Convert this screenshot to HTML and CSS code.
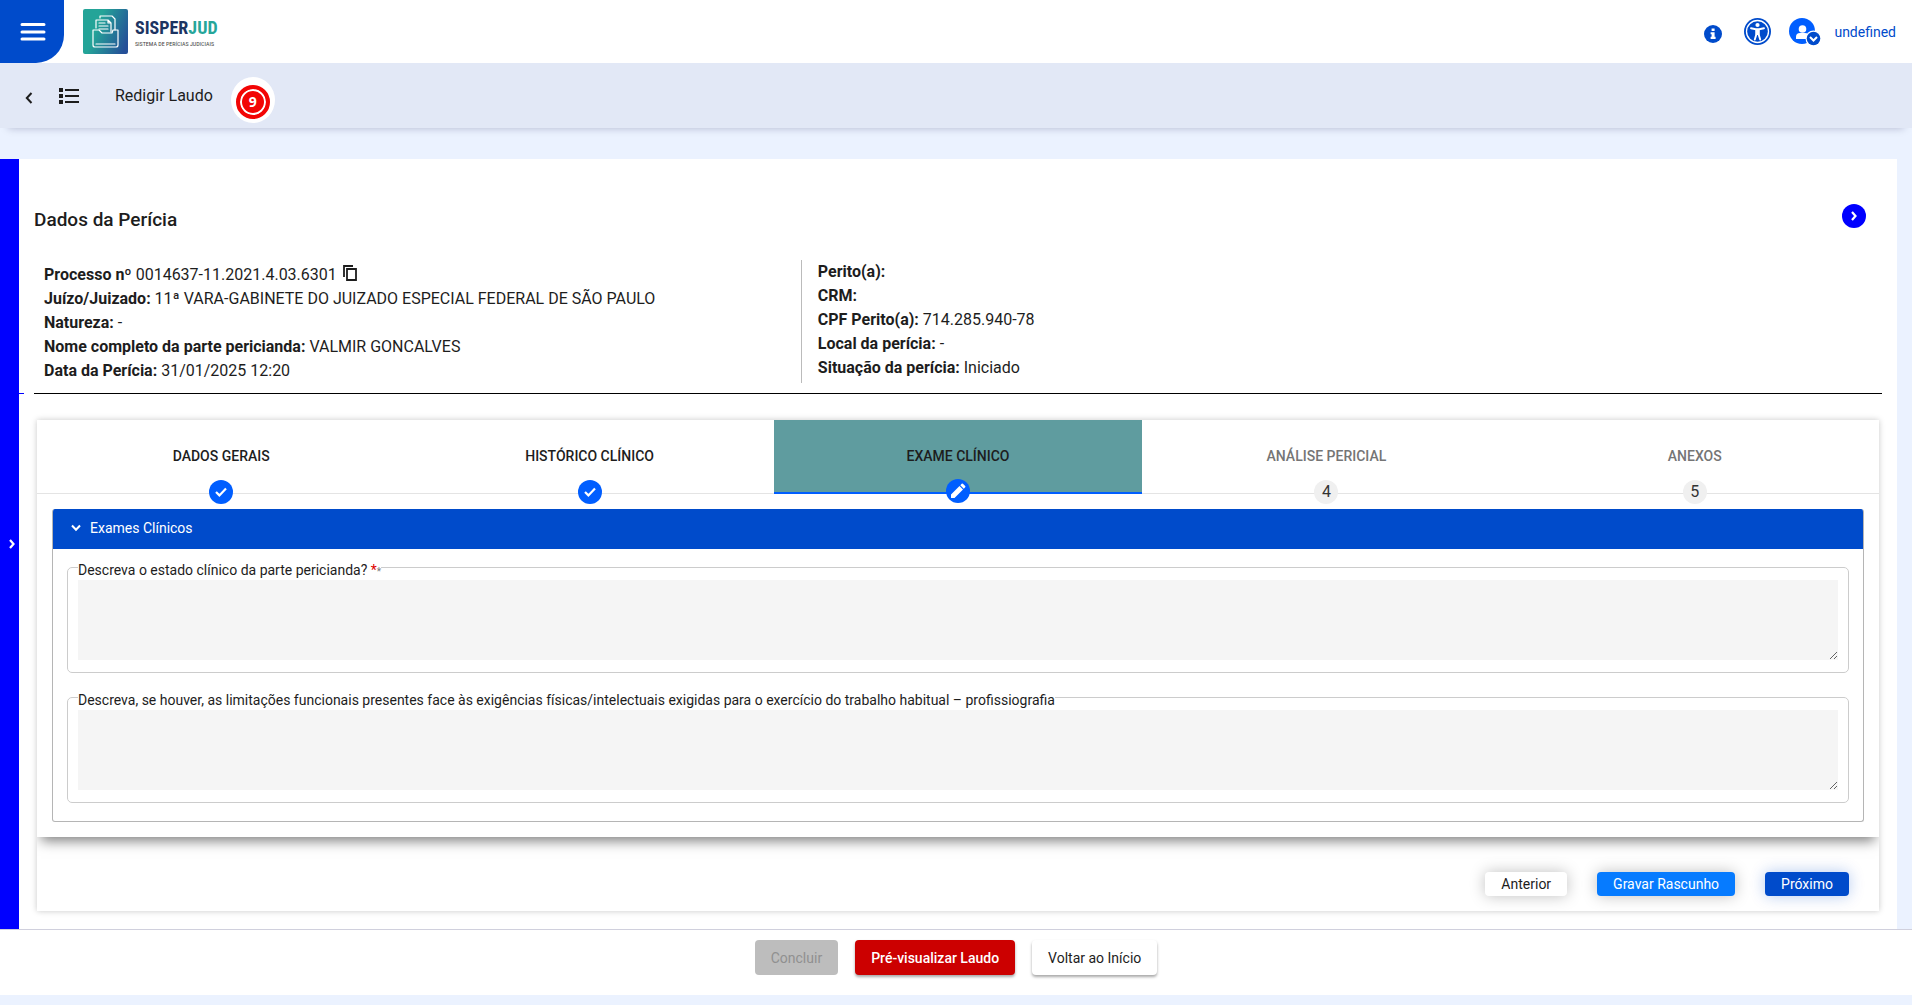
FILE: index.html
```html
<!DOCTYPE html>
<html lang="pt-BR">
<head>
<meta charset="utf-8">
<meta name="viewport" content="width=device-width, initial-scale=1">
<title>SISPERJUD - Redigir Laudo</title>
<link rel="stylesheet" href="styles.css">
</head>
<body>
<header class="topbar">
  <button class="menu-button" type="button" aria-label="Menu">
    <svg width="26" height="18" viewBox="0 0 26 18" fill="none" stroke="#fff" stroke-width="3" stroke-linecap="round"><path d="M2 1.5h22M2 9h22M2 16h22"/></svg>
  </button>
  <a class="logo" href="#">
    <svg class="logo-mark" width="45" height="45" viewBox="0 0 45 45">
      <defs><linearGradient id="brand" x1="0" y1="0.3" x2="1" y2="0.7"><stop offset="0.3" stop-color="#24a498"/><stop offset="1" stop-color="#254f98"/></linearGradient></defs>
      <rect width="45" height="45" rx="2" fill="url(#brand)"/>
      <g fill="none" stroke="#fff" stroke-width="1.2" stroke-linejoin="round" stroke-linecap="round">
        <path d="M17 9V7h12l3 3v11"/>
        <path d="M13 19V11h12l3 3v9M25 11v3h3M16 14h6M16 17h9M16 20h9"/>
        <path d="M10 36V21h6l3 3h10l1-3h5v15q0 2-2 2H12q-2 0-2-2zM13 35h19"/>
      </g>
    </svg>
    <span class="logo-text"><span class="logo-name">SISPER<span class="logo-accent">JUD</span></span><span class="logo-sub">SISTEMA DE PERÍCIAS JUDICIAIS</span></span>
  </a>
  <div class="user-area">
    <button class="icon-button" type="button" aria-label="Informações">
      <svg width="18" height="18" viewBox="0 0 18 18"><circle cx="9" cy="9" r="9" fill="#004bcb"/><path fill="#fff" d="M7.6 3.6h3v2.4h-3zM6.6 7.2h4v4.6h1V14H6.6v-2.2h1V9.300h-1z"/></svg>
    </button>
    <button class="icon-button" type="button" aria-label="Acessibilidade">
      <svg width="27" height="27" viewBox="0 0 27 27"><circle cx="13.500" cy="13.500" r="13.500" fill="#004bcb"/><circle cx="13.500" cy="13.500" r="11" fill="none" stroke="#fff" stroke-width="1.300"/><circle cx="13.500" cy="7" r="2.100" fill="#fff"/><path d="M7 10.300l4.800 1h3.400l4.800-1M12.300 11.500v5l-1.500 5M14.700 11.500v5l1.500 5" fill="none" stroke="#fff" stroke-width="1.900" stroke-linecap="round"/><path d="M11.600 11h3.800v6h-3.800z" fill="#fff"/></svg>
    </button>
    <button class="user-button" type="button">
      <svg width="32" height="28" viewBox="0 0 32 28"><circle cx="13" cy="13" r="13" fill="#005eff"/><circle cx="13.500" cy="11" r="3.800" fill="#fff"/><path d="M7 21v-2q0-4 4-4h5q4 0 4 4v2z" fill="#fff"/><circle cx="24.500" cy="20.500" r="8" fill="#fff"/><circle cx="24.500" cy="20.500" r="6.800" fill="#004bcb"/><path d="M21 19l3.500 3.500L28 19" fill="none" stroke="#fff" stroke-width="2"/></svg>
      <span>undefined</span>
    </button>
  </div>
</header>

<nav class="titlebar">
  <button class="icon-button back-button" type="button" aria-label="Voltar">
    <svg width="8" height="12" viewBox="0 0 8 12"><path d="M6.500 1L1.800 6l4.700 5" fill="none" stroke="#1d1d1d" stroke-width="2"/></svg>
  </button>
  <button class="icon-button list-button" type="button" aria-label="Lista">
    <svg width="20" height="16" viewBox="0 0 20 16" fill="#1d1d1d"><path d="M0 0h4v4H0zM0 6h4v4H0zM0 12h4v4H0zM6 1h14v2H6zM6 7h14v2H6zM6 13h14v2H6z"/></svg>
  </button>
  <h1 class="page-title">Redigir Laudo</h1>
  <span class="marker"><span class="marker-ring">9</span></span>
</nav>

<div class="workspace">
  <button class="side-toggle" type="button" aria-label="Expandir menu lateral">
    <svg width="6" height="10" viewBox="0 0 6 10"><path d="M1 1l3.500 4L1 9" fill="none" stroke="#fff" stroke-width="2.200"/></svg>
  </button>
  <main class="panel">
    <div class="panel-head">
      <h2>Dados da Perícia</h2>
      <button class="round-button" type="button" aria-label="Mostrar detalhes">
        <svg width="6" height="10" viewBox="0 0 6 10"><path d="M1 1l3.500 4L1 9" fill="none" stroke="#fff" stroke-width="2.200"/></svg>
      </button>
    </div>

    <section class="details">
      <div class="detail-col">
        <p><b>Processo nº</b> 0014637-11.2021.4.03.6301 <button class="copy-button" type="button" aria-label="Copiar número"><svg width="14" height="16" viewBox="0 0 14 16" fill="none" stroke="#1d1d1d" stroke-width="1.800"><path d="M1 12V1h9M4 4h9v11H4z"/></svg></button></p>
        <p><b>Juízo/Juizado:</b> 11ª VARA-GABINETE DO JUIZADO ESPECIAL FEDERAL DE SÃO PAULO</p>
        <p><b>Natureza:</b> -</p>
        <p><b>Nome completo da parte pericianda:</b> VALMIR GONCALVES</p>
        <p><b>Data da Perícia:</b> 31/01/2025 12:20</p>
      </div>
      <div class="detail-col detail-expert">
        <p><b>Perito(a):</b></p>
        <p><b>CRM:</b></p>
        <p><b>CPF Perito(a):</b> 714.285.940-78</p>
        <p><b>Local da perícia:</b> -</p>
        <p><b>Situação da perícia:</b> Iniciado</p>
      </div>
    </section>

    <section class="stepper">
      <div class="tabs" role="tablist">
        <button class="tab" type="button" role="tab">DADOS GERAIS<span class="dot done"><svg width="12" height="10" viewBox="0 0 12 10"><path d="M1 5l3.400 3.400L11 1.500" fill="none" stroke="#fff" stroke-width="2.200"/></svg></span></button>
        <button class="tab" type="button" role="tab">HISTÓRICO CLÍNICO<span class="dot done"><svg width="12" height="10" viewBox="0 0 12 10"><path d="M1 5l3.400 3.400L11 1.500" fill="none" stroke="#fff" stroke-width="2.200"/></svg></span></button>
        <button class="tab active" type="button" role="tab" aria-selected="true">EXAME CLÍNICO<span class="dot done"><svg width="16" height="16" viewBox="0 0 16 16" fill="#fff"><path d="M1 15v-3.500l8.500-8.500 3.500 3.500L4.500 15zM10.300 2.200l1.400-1.400q.6-.5 1.200 0l2.300 2.300q.5.600 0 1.200l-1.400 1.400z"/></svg></span></button>
        <button class="tab pending" type="button" role="tab">ANÁLISE PERICIAL<span class="dot">4</span></button>
        <button class="tab pending" type="button" role="tab">ANEXOS<span class="dot">5</span></button>
      </div>

      <div class="step-content">
        <div class="card">
          <button class="card-head" type="button" aria-expanded="true">
            <svg width="10" height="8" viewBox="0 0 10 8"><path d="M1 1.500l4 4.200 4-4.200" fill="none" stroke="#fff" stroke-width="2"/></svg>
            Exames Clínicos
          </button>
          <div class="card-body">
            <div class="field">
              <label for="estado">Descreva o estado clínico da parte pericianda? <span class="required">*</span> <span class="hint">*</span></label>
              <textarea id="estado" required></textarea>
            </div>
            <div class="field">
              <label for="limitacoes">Descreva, se houver, as limitações funcionais presentes face às exigências físicas/intelectuais exigidas para o exercício do trabalho habitual – profissiografia</label>
              <textarea id="limitacoes"></textarea>
            </div>
          </div>
        </div>
      </div>

      <div class="step-actions">
        <button class="btn" type="button">Anterior</button>
        <button class="btn save" type="button">Gravar Rascunho</button>
        <button class="btn next" type="button">Próximo</button>
      </div>
    </section>
  </main>
</div>

<footer class="bottom-actions">
  <button class="btn tall" type="button" disabled>Concluir</button>
  <button class="btn tall preview" type="button">Pré-visualizar Laudo</button>
  <button class="btn tall" type="button">Voltar ao Início</button>
</footer>
</body>
</html>
```
FILE: styles.css
```css
* { box-sizing: border-box; }

body {
  margin: 0;
  background: #ebf2ff;
  color: #1d1d1d;
  font: 16px/24px Roboto, sans-serif;
}

button {
  margin: 0;
  padding: 0;
  border: 0;
  background: none;
  color: inherit;
  font: inherit;
  cursor: pointer;
}

svg { display: block; flex: none; }
h1, h2, p { margin: 0; }

/* Top bar */
.topbar {
  display: flex;
  align-items: center;
  height: 63px;
  padding-right: 16px;
  background: #fff;
}

.menu-button {
  display: flex;
  align-items: center;
  align-self: stretch;
  width: 64px;
  padding-left: 20px;
  border-bottom-right-radius: 28px;
  background: #004bcb;
}

.logo {
  display: flex;
  gap: 7px;
  margin-left: 19px;
  color: #1c3462;
  text-decoration: none;
}

.logo-text {
  display: flex;
  flex-direction: column;
  padding-top: 7px;
  white-space: nowrap;
}

.logo-name {
  font: bold 18px/24px "Liberation Sans Narrow", "Roboto Condensed", Roboto, sans-serif;
}

.logo-accent { color: #26a69a; }

.logo-sub {
  color: #444;
  font: 6px/8px "Liberation Sans Narrow", "Roboto Condensed", Roboto, sans-serif;
}

.user-area {
  display: flex;
  align-items: center;
  gap: 22px;
  margin-left: auto;
}

.user-area .icon-button:first-child { padding-top: 4px; }

.user-button {
  display: flex;
  align-items: center;
  gap: 13px;
  margin-left: -4px;
  color: #004bcb;
  font-size: 14px;
}

/* Title bar */
.titlebar {
  display: flex;
  align-items: center;
  height: 65px;
  padding-left: 25px;
  background: #e2e8f6;
  box-shadow: 0 8px 8px -8px rgba(0, 0, 60, .25);
}

.back-button { padding-top: 4px; }

.list-button { margin-left: 26px; }

.page-title {
  margin-left: 36px;
  font-size: 16px;
  font-weight: 400;
}

.marker {
  display: grid;
  place-items: center;
  width: 44px;
  height: 46px;
  margin: 8px 0 0 18px;
  border-radius: 50%;
  background: #fff;
}

.marker-ring {
  width: 34px;
  height: 34px;
  margin-top: 4px;
  border: 4px solid #f20505;
  border-radius: 50%;
  background: #f20505;
  box-shadow: inset 0 0 0 2px #fff;
  color: #fff;
  font: bold 14px/26px "Open Sans", sans-serif;
  text-align: center;
}

/* Workspace */
.workspace {
  display: flex;
  margin-top: 31px;
  padding-right: 15px;
}

.side-toggle {
  display: flex;
  align-items: center;
  justify-content: flex-end;
  flex: none;
  width: 19px;
  padding-right: 4px;
  background: #00f;
}

.panel {
  flex: 1;
  min-width: 0;
  padding: 44px 15px 18px;
  background: #fff;
}

.panel-head {
  display: flex;
  align-items: flex-start;
  justify-content: space-between;
  padding-right: 16px;
}

.panel-head h2 {
  padding-top: 5px;
  font-size: 19px;
  font-weight: 500;
}

.round-button {
  display: grid;
  place-items: center;
  width: 24px;
  height: 24px;
  margin-top: 1px;
  border-radius: 50%;
  background: #00f;
}

.details {
  position: relative;
  display: grid;
  grid-template-columns: 7fr 10fr;
  margin-top: 28px;
  padding: 0 0 10px 10px;
  border-bottom: 1px solid #000;
}

/* End of the side strip's divider */
.details::before {
  content: "";
  position: absolute;
  bottom: -1px;
  left: -15px;
  width: 5px;
  height: 1px;
  background: #00f;
}

.detail-col { padding-top: 3px; }
.detail-col b { font-weight: 700; }

.detail-expert {
  padding: 0 0 3px 16px;
  border-left: 1px solid #bbb;
}

.copy-button {
  display: inline-block;
  margin-left: 2px;
  vertical-align: -1px;
}

/* Stepper */
.stepper {
  margin: 26px 3px 0;
  box-shadow: 0 0 6px rgba(0, 0, 0, .22);
}

.tabs {
  display: grid;
  grid-template-columns: repeat(5, 1fr);
  height: 74px;
}

.tab {
  position: relative;
  padding-bottom: 1px;
  border-bottom: 1px solid #e4e4e4;
  font-size: 14px;
  font-weight: 500;
}

.tab.active {
  border-bottom: 2px solid #005eff;
  background: #5f9c9f;
}

.tab.pending { color: #757575; }

.dot {
  position: absolute;
  bottom: -11px;
  left: 50%;
  display: grid;
  place-items: center;
  width: 24px;
  height: 24px;
  margin-left: -12px;
  border-radius: 50%;
  background: #f0f0f0;
  color: #333;
  font-size: 16px;
  font-weight: 400;
}

.dot.done { background: #005eff; }

/* The clip keeps the shadow below the content and off its sides */
.step-content {
  padding: 15px;
  box-shadow: 0 8px 12px -4px rgba(0, 0, 0, .5);
  clip-path: inset(0 0 -40px);
}

.card {
  overflow: hidden;
  border: 1px solid #b5b5b5;
  border-top: 0;
  border-radius: 3px;
}

.card-head {
  display: flex;
  align-items: center;
  gap: 9px;
  width: 100%;
  height: 40px;
  padding: 0 0 2px 18px;
  background: #004bcb;
  color: #fff;
  font-size: 14px;
}

.card-body {
  display: flex;
  flex-direction: column;
  gap: 24px;
  padding: 18px 14px;
}

.field {
  padding: 0 10px 12px;
  border: 1px solid #ccc;
  border-radius: 5px;
}

.field label {
  display: table;
  margin-top: -8px;
  background: #fff;
  font-size: 14px;
  line-height: 20px;
}

.required { color: #d00; }
.hint { color: #777; font-size: 10px; line-height: 10px; }

.field textarea {
  display: block;
  width: 100%;
  height: 80px;
  border: 0;
  background: #f5f5f5;
  font: 14px/20px Roboto, sans-serif;
  resize: vertical;
}

.step-actions {
  display: flex;
  justify-content: flex-end;
  gap: 30px;
  padding: 35px 30px 15px;
}

.btn {
  height: 24px;
  padding: 0 16px;
  border-radius: 4px;
  background: #fff;
  box-shadow: 0 0 15px rgba(0, 0, 0, .25);
  font-size: 14px;
}

.btn.save { background: #067bff; color: #fff; }

.btn.next {
  background: #004bcb;
  box-shadow: 0 0 15px rgba(0, 75, 203, .3);
  color: #fff;
}

/* Bottom actions */
.bottom-actions {
  display: flex;
  justify-content: center;
  gap: 17px;
  margin-bottom: 10px;
  padding: 10px 0 20px;
  border-top: 1px solid #d0d0dd;
  background: #fff;
}

.btn.tall {
  height: 35px;
  box-shadow: 0 2px 3px rgba(0, 0, 0, .35);
}

.btn.preview { background: #c00; color: #fff; font-weight: 500; }

.btn.tall:disabled {
  background: #bdbdbd;
  box-shadow: none;
  color: #909090;
}
```
